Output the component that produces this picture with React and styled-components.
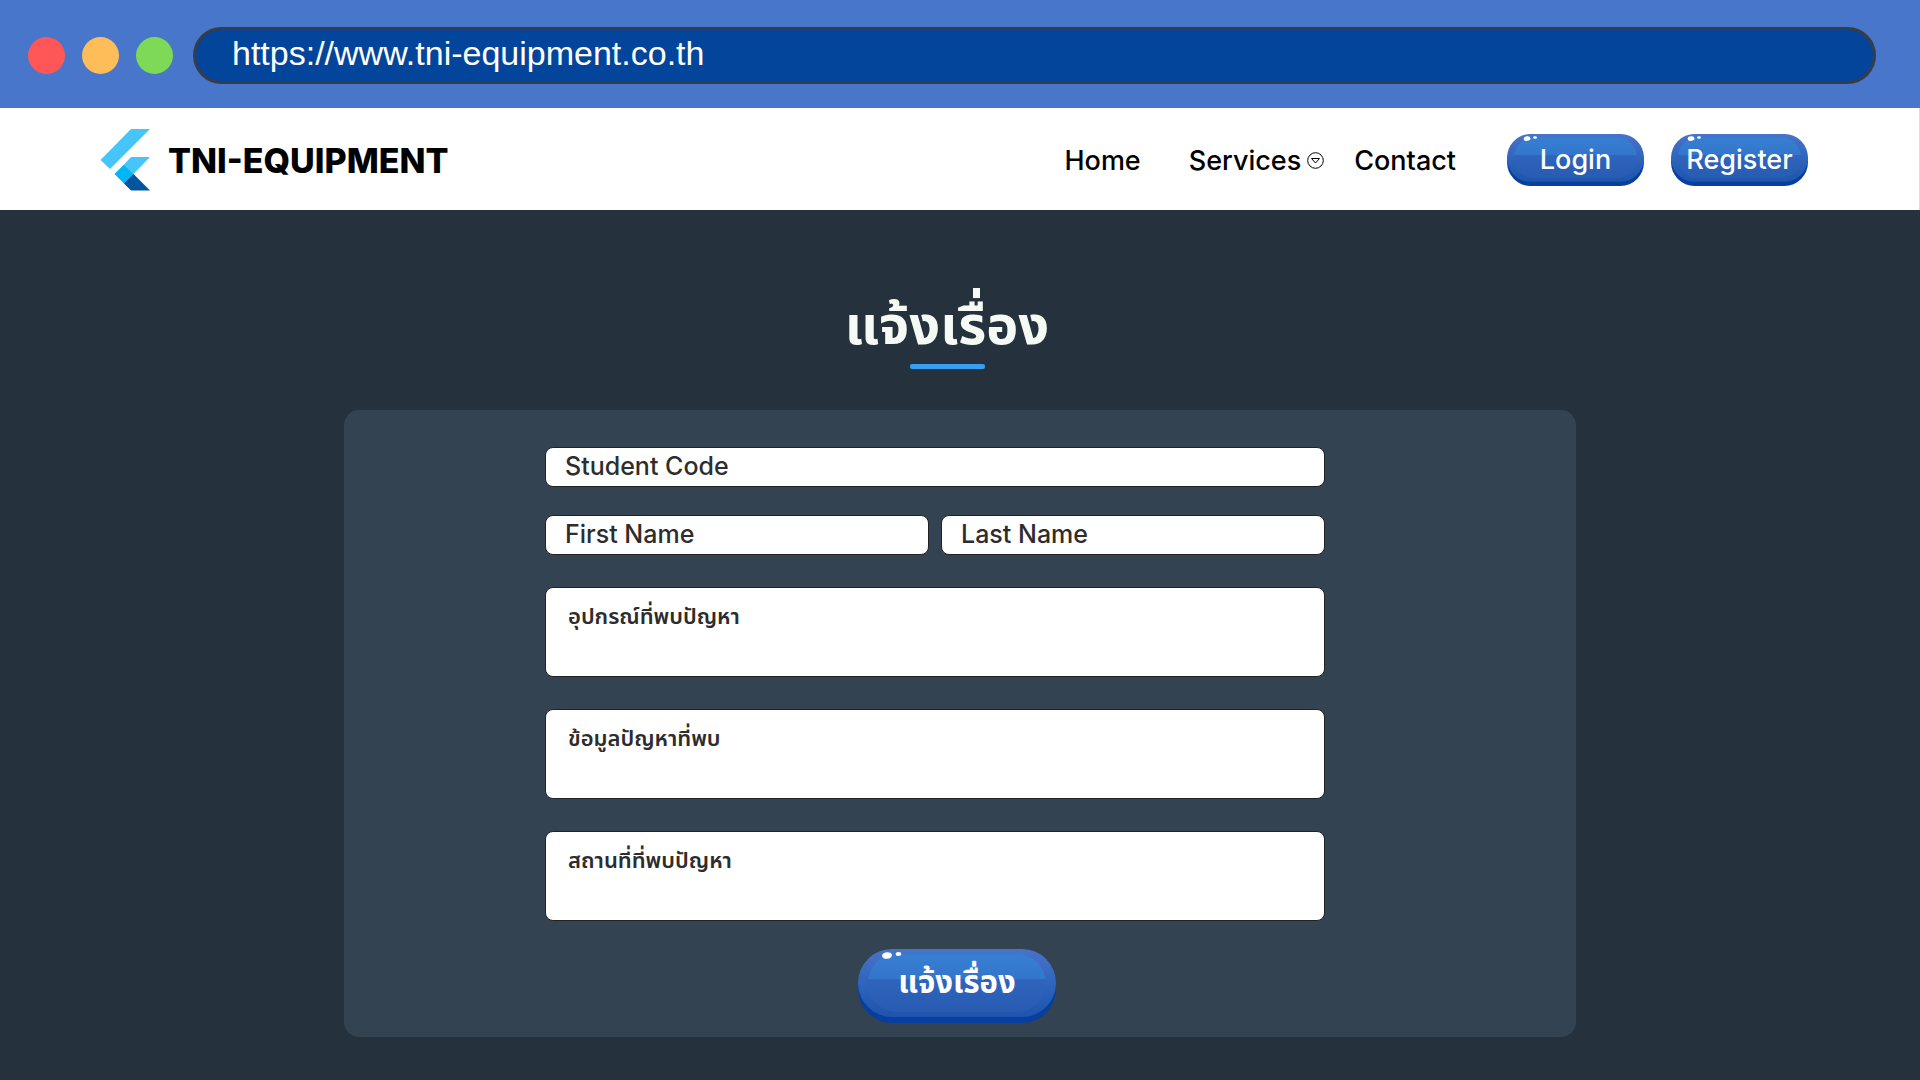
import React from "react";
import styled, { createGlobalStyle } from "styled-components";

const latin = `Inter, "Noto Sans", "Liberation Sans", sans-serif`;
const thai = `"Noto Sans Thai", "Noto Sans", "Open Sans", sans-serif`;

const GlobalStyle = createGlobalStyle`
  *, *::before, *::after { box-sizing: border-box; }
  body {
    margin: 0;
    min-height: 100vh;
    background: #25313d;
    font-family: ${latin};
  }
`;

const BrowserBar = styled.div`
  display: flex;
  align-items: center;
  gap: 20px;
  height: 108px;
  padding: 3px 44px 0 28px;
  background: #4876ca;
`;

const Lights = styled.div`
  display: flex;
  gap: 17px;
`;

const Light = styled.span`
  width: 37px;
  height: 37px;
  border-radius: 50%;
  background: ${(p) => p.$color};
`;

const Address = styled.input`
  flex: 1;
  min-width: 0;
  height: 57px;
  padding: 0 36px 4px;
  border: 3px solid #363d4a;
  border-radius: 29px;
  background: #03459b;
  color: #fff;
  font: 34px "Liberation Sans", Arial, sans-serif;
  outline: none;
`;

const Header = styled.header`
  display: flex;
  align-items: center;
  justify-content: space-between;
  height: 102px;
  padding: 2px 111px 0 100px;
  background: #fff;
  border-right: 1px solid #dcdcdc;
`;

const Brand = styled.a`
  display: flex;
  align-items: center;
  gap: 18px;
  color: #000;
  font-size: 34px;
  font-weight: 800;
  text-decoration: none;
`;

const Actions = styled.div`
  display: flex;
  align-items: center;
  gap: 27px;
`;

const Nav = styled.nav`
  display: flex;
  align-items: center;
  gap: 30px;
  margin-right: 24px;
`;

const NavLink = styled.a`
  color: #000;
  font-size: 27px;
  font-weight: 500;
  text-decoration: none;
`;

const NavMenu = styled.button`
  display: flex;
  align-items: center;
  gap: 6px;
  margin-left: 18px;
  padding: 0;
  border: 0;
  background: none;
  color: #000;
  font: 500 27px ${latin};
`;

const GlossyButton = styled.button`
  position: relative;
  display: grid;
  place-items: center;
  width: ${(p) => (p.$large ? 198 : 137)}px;
  height: ${(p) => (p.$large ? 74 : 52)}px;
  padding: 0 0 ${(p) => (p.$large ? 6 : 2)}px;
  border: 0;
  background: none;
  color: #fff;
  font: ${(p) => (p.$large ? `700 31px ${thai}` : `500 27px ${latin}`)};
`;

const Skin = styled.svg`
  position: absolute;
  inset: 0;
  width: 100%;
  height: 100%;
`;

const Caption = styled.span`
  position: relative;
`;

const Main = styled.main`
  padding: 82px 32px 43px;
`;

const Heading = styled.div`
  display: flex;
  flex-direction: column;
  align-items: center;
  padding-right: 26px;
`;

const Title = styled.h1`
  margin: 0;
  color: #f6faf5;
  font: 700 54px/72px ${thai};
`;

const Underline = styled.span`
  width: 75px;
  height: 5px;
  border-radius: 2px;
  background: #369ff4;
`;

const Card = styled.form`
  display: flex;
  flex-direction: column;
  align-items: center;
  gap: 28px;
  max-width: 1232px;
  margin: 41px auto 0;
  padding: 37px 6px 14px 0;
  border-radius: 15px;
  background: #344351;
`;

const Fields = styled.div`
  display: grid;
  gap: 32px;
  align-self: stretch;
  padding: 0 245px 0 201px;
`;

const Identity = styled.div`
  display: grid;
  grid-template-columns: 1fr 1fr;
  gap: 28px 12px;
`;

const Input = styled.input`
  width: 100%;
  min-width: 0;
  height: 40px;
  grid-column: ${(p) => (p.$wide ? "1 / -1" : "auto")};
  padding: 0 19px 2px;
  border: 1px solid #222;
  border-radius: 8px;
  background: #fff;
  color: #2d2d2d;
  font: 500 25px ${latin};
  &::placeholder { color: #2d2d2d; opacity: 1; }
`;

const TextArea = styled.textarea`
  display: block;
  width: 100%;
  height: 90px;
  padding: 10px 22px;
  border: 1px solid #222;
  border-radius: 8px;
  background: #fff;
  color: #2d2d2d;
  font: 600 22px/40px ${thai};
  resize: none;
  &::placeholder { color: #2d2d2d; opacity: 1; }
`;

function Logo() {
  return (
    <svg width="50" height="62" viewBox="0 0 50 62" aria-hidden="true">
      <path d="M31 0H50L10 40L0.500 31Z" fill="#47c5fb" />
      <path d="M31 28H50L33.500 45L24 35.500Z" fill="#47c5fb" />
      <path d="M24 35.500L33.500 45L24 54.500L14.500 45Z" fill="#00b5f8" />
      <path d="M33.500 45L50 61.500H31L24 54.500Z" fill="#00569e" />
      <path d="M24 54.500L33.500 45L29 53Z" fill="#003f7c" opacity="0.6" />
    </svg>
  );
}

function DropIcon() {
  return (
    <svg width="17" height="17" viewBox="0 0 17 17" fill="none" stroke="#000" aria-hidden="true">
      <circle cx="8.500" cy="8.500" r="7.800" strokeWidth="1" />
      <path d="M4.500 6.500H12.500L8.500 11Z" strokeWidth="1" strokeLinejoin="round" />
    </svg>
  );
}

function Glossy({ id, large, type = "button", children }) {
  return (
    <GlossyButton type={type} $large={large}>
      <Skin viewBox="0 0 198 74" preserveAspectRatio="none" aria-hidden="true">
        <defs>
          <linearGradient id={`${id}-body`} x1="0" y1="0" x2="0" y2="1">
            <stop offset="0" stopColor="#4873c8" />
            <stop offset="0.500" stopColor="#2f65bd" />
            <stop offset="1" stopColor="#1c55ab" />
          </linearGradient>
          <linearGradient id={`${id}-face`} x1="0" y1="0" x2="0" y2="1">
            <stop offset="0" stopColor="#377fd3" />
            <stop offset="0.430" stopColor="#3376cc" />
            <stop offset="0.430" stopColor="#3065bd" />
            <stop offset="1" stopColor="#285bb2" />
          </linearGradient>
        </defs>
        <rect y="6" width="198" height="68" rx="34" fill="#083f9f" />
        <rect width="198" height="68" rx="34" fill={`url(#${id}-body)`} />
        <rect x="10" y="5" width="178" height="58" rx="29" fill={`url(#${id}-face)`} />
        <ellipse cx="29" cy="6.500" rx="5" ry="3.300" fill="#fff" transform="rotate(-6 29 6.500)" />
        <ellipse cx="40.500" cy="5" rx="2.800" ry="1.900" fill="#fff" />
      </Skin>
      <Caption>{children}</Caption>
    </GlossyButton>
  );
}

export default function App() {
  return (
    <>
      <GlobalStyle />
      <BrowserBar>
        <Lights>
          <Light $color="#ff5757" />
          <Light $color="#ffbd59" />
          <Light $color="#7ed957" />
        </Lights>
        <Address aria-label="URL" defaultValue="https://www.tni-equipment.co.th" />
      </BrowserBar>
      <Header>
        <Brand href="#">
          <Logo />
          TNI-EQUIPMENT
        </Brand>
        <Actions>
          <Nav>
            <NavLink href="#home">Home</NavLink>
            <NavMenu type="button" aria-haspopup="menu">
              Services
              <DropIcon />
            </NavMenu>
            <NavLink href="#contact">Contact</NavLink>
          </Nav>
          <Glossy id="login">Login</Glossy>
          <Glossy id="register">Register</Glossy>
        </Actions>
      </Header>
      <Main>
        <Heading>
          <Title>แจ้งเรื่อง</Title>
          <Underline />
        </Heading>
        <Card>
          <Fields>
            <Identity>
              <Input $wide aria-label="Student Code" placeholder="Student Code" />
              <Input aria-label="First Name" placeholder="First Name" />
              <Input aria-label="Last Name" placeholder="Last Name" />
            </Identity>
            <TextArea aria-label="อุปกรณ์ที่พบปัญหา" placeholder="อุปกรณ์ที่พบปัญหา" />
            <TextArea aria-label="ข้อมูลปัญหาที่พบ" placeholder="ข้อมูลปัญหาที่พบ" />
            <TextArea aria-label="สถานที่ที่พบปัญหา" placeholder="สถานที่ที่พบปัญหา" />
          </Fields>
          <Glossy id="submit" type="submit" large>แจ้งเรื่อง</Glossy>
        </Card>
      </Main>
    </>
  );
}
